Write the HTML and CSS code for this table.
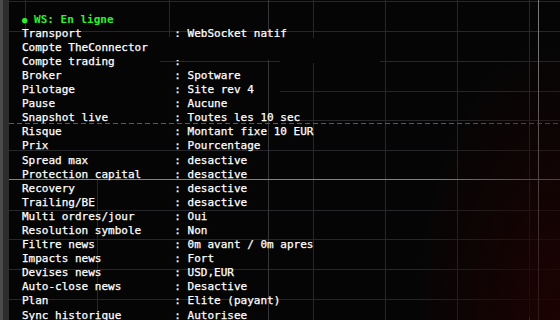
FILE: index.html
```html
<!DOCTYPE html>
<html lang="fr">
<head>
<meta charset="utf-8">
<title>WS status</title>
<link rel="stylesheet" href="styles.css">
</head>
<body>
<div class="app">
  <div class="sidebar"></div>
  <div class="chart">
    <svg class="grid" width="551" height="320" viewBox="0 0 551 320" aria-hidden="true">
      <g stroke="#27272b" stroke-width="1">
        <line x1="0" y1="1.5" x2="551" y2="1.5"/>
        <line x1="0" y1="31.5" x2="551" y2="31.5"/>
        <line x1="151" y1="61.5" x2="271" y2="61.5"/>
        <line x1="371" y1="61.5" x2="551" y2="61.5"/>
        <line x1="271" y1="91.5" x2="551" y2="91.5"/>
        <line x1="271" y1="120.5" x2="551" y2="120.5"/>
        <line x1="0" y1="150.5" x2="551" y2="150.5"/>
        <line x1="0" y1="210.5" x2="551" y2="210.5"/>
        <line x1="0" y1="239.5" x2="551" y2="239.5"/>
        <line x1="0" y1="269.5" x2="551" y2="269.5"/>
        <line x1="0" y1="299.5" x2="551" y2="299.5"/>
        <line x1="16.5" y1="0" x2="16.5" y2="31"/>
        <line x1="88.5" y1="180" x2="88.5" y2="320"/>
        <line x1="160.5" y1="0" x2="160.5" y2="38"/>
        <line x1="304.5" y1="0" x2="304.5" y2="320"/>
        <line x1="376.5" y1="0" x2="376.5" y2="320"/>
        <line x1="448.5" y1="0" x2="448.5" y2="320"/>
        <line x1="520.5" y1="0" x2="520.5" y2="320"/>
      </g>
      <line x1="259.5" y1="0" x2="259.5" y2="320" stroke="#37373b"/>
      <line x1="529.5" y1="0" x2="529.5" y2="320" stroke="#7a7a7a"/>
      <line x1="0" y1="123.5" x2="551" y2="123.5" stroke="#1d7d4e" stroke-dasharray="5 3"/>
      <line x1="0" y1="179.5" x2="551" y2="179.5" stroke="#e0603b"/>
      <line x1="520.5" y1="317" x2="520.5" y2="320" stroke="#e0603b"/>
    </svg>
    <div class="glow"></div>
    <div class="panel">
      <div class="status"><span class="dot">●</span> WS: En ligne</div>
      <div class="row"><span class="k">Transport</span><span class="v">: WebSocket natif</span></div>
      <div class="row"><span class="k">Compte TheConnector</span><span class="v">:</span></div>
      <div class="row"><span class="k">Compte trading</span><span class="v">:</span></div>
      <div class="row"><span class="k">Broker</span><span class="v">: Spotware</span></div>
      <div class="row"><span class="k">Pilotage</span><span class="v">: Site rev 4</span></div>
      <div class="row"><span class="k">Pause</span><span class="v">: Aucune</span></div>
      <div class="row"><span class="k">Snapshot live</span><span class="v">: Toutes les 10 sec</span></div>
      <div class="row"><span class="k">Risque</span><span class="v">: Montant fixe 10 EUR</span></div>
      <div class="row"><span class="k">Prix</span><span class="v">: Pourcentage</span></div>
      <div class="row"><span class="k">Spread max</span><span class="v">: desactive</span></div>
      <div class="row"><span class="k">Protection capital</span><span class="v">: desactive</span></div>
      <div class="row"><span class="k">Recovery</span><span class="v">: desactive</span></div>
      <div class="row"><span class="k">Trailing/BE</span><span class="v">: desactive</span></div>
      <div class="row"><span class="k">Multi ordres/jour</span><span class="v">: Oui</span></div>
      <div class="row"><span class="k">Resolution symbole</span><span class="v">: Non</span></div>
      <div class="row"><span class="k">Filtre news</span><span class="v">: 0m avant / 0m apres</span></div>
      <div class="row"><span class="k">Impacts news</span><span class="v">: Fort</span></div>
      <div class="row"><span class="k">Devises news</span><span class="v">: USD,EUR</span></div>
      <div class="row"><span class="k">Auto-close news</span><span class="v">: Desactive</span></div>
      <div class="row"><span class="k">Plan</span><span class="v">: Elite (payant)</span></div>
      <div class="row"><span class="k">Sync historique</span><span class="v">: Autorisee</span></div>
    </div>
    <div class="redact redact-a"></div>
    <div class="redact redact-b"></div>
  </div>
</div>
</body>
</html>
```
FILE: styles.css
```css
html, body {
  margin: 0;
  padding: 0;
  background: #050505;
  overflow: hidden;
}

.app {
  display: flex;
  width: 560px;
  height: 320px;
  overflow: hidden;
}

.sidebar {
  flex: 0 0 9px;
  background: linear-gradient(to right, #4b4b4b 0 3px, #2d2d2d 3px 9px);
}

.chart {
  position: relative;
  flex: 1;
  background: #050505;
  overflow: hidden;
}

.grid {
  position: absolute;
  left: 0;
  top: 0;
  z-index: 0;
}

.glow {
  position: absolute;
  inset: 0;
  z-index: 0;
  background: radial-gradient(ellipse 150px 290px at 100% 100%, rgba(30, 2, 2, 0.95), rgba(30, 2, 2, 0) 100%);
}

.panel {
  position: relative;
  z-index: 1;
  display: flex;
  flex-direction: column;
  padding: 12.6px 0 0 13px;
  font-family: "DejaVu Sans Mono", "Liberation Mono", monospace;
  font-size: 11px;
  line-height: 14.1px;
  color: #ffffff;
  white-space: pre;
  -webkit-text-stroke: 0.25px #ffffff;
}

.status {
  color: #2bf02b;
  font-weight: bold;
  -webkit-text-stroke: 0;
}

.dot {
  display: inline-block;
  width: 1ch;
  font-size: 9px;
}

.row {
  display: grid;
  grid-template-columns: 23ch auto;
}

.redact {
  position: absolute;
  z-index: 2;
  background: #050505;
}

.redact-a {
  left: 151px;
  top: 37px;
  width: 120px;
  height: 23px;
}

.redact-b {
  left: 271px;
  top: 38px;
  width: 100px;
  height: 25px;
}
```
